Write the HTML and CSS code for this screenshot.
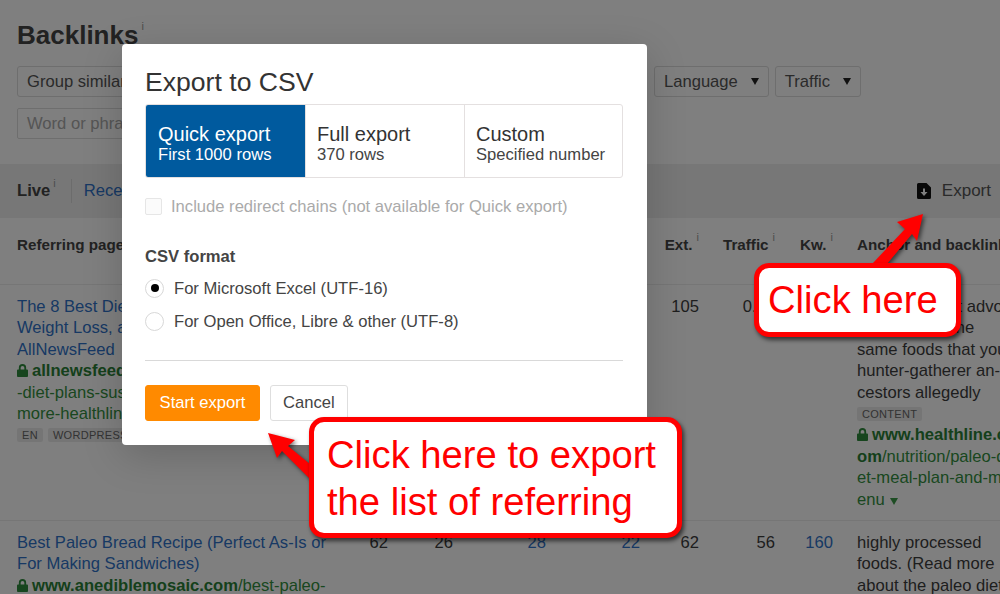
FILE: index.html
```html
<!DOCTYPE html>
<html lang="en">
<head>
<meta charset="utf-8">
<title>Backlinks</title>
<link rel="stylesheet" href="styles.css">
</head>
<body>
<div class="page">
  <header class="head">
    <h1 class="title">Backlinks<sup class="info">i</sup></h1>
    <div class="filters">
      <div class="filter">Group similar</div>
      <div class="filter-group">
        <div class="filter">Language<span class="caret"></span></div>
        <div class="filter">Traffic<span class="caret"></span></div>
      </div>
    </div>
    <div class="search">Word or phrase</div>
  </header>

  <div class="band">
    <div class="band-left">
      <strong class="live">Live<sup class="info">i</sup></strong>
      <span class="sep"></span>
      <a class="link">Recent</a>
    </div>
    <div class="export">
      <svg class="export-icon" viewBox="0 0 14 16" aria-hidden="true"><path d="M1.5 0H9.5L14 4.5V14.5A1.5 1.5 0 0 1 12.5 16H1.5A1.5 1.5 0 0 1 0 14.5V1.5A1.5 1.5 0 0 1 1.5 0Z" fill="#111"/><path d="M6 5.5H8V9H10.5L7 13L3.5 9H6Z" fill="#fff"/></svg>
      <span>Export</span>
    </div>
  </div>

  <div class="row row-head">
    <div>Referring page</div>
    <div></div><div></div><div></div><div></div>
    <div class="num">Ext.<sup class="info">i</sup></div>
    <div class="num">Traffic<sup class="info">i</sup></div>
    <div class="num">Kw.<sup class="info">i</sup></div>
    <div class="anchor">Anchor and backlink</div>
  </div>

  <div class="row row-one">
    <div>
      <a class="link">The 8 Best Diets for<br>Weight Loss, and<br>AllNewsFeed</a>
      <div class="url"><svg class="lock" viewBox="0 0 12 14" aria-hidden="true"><path d="M2 6V4a4 4 0 0 1 8 0v2h1a1 1 0 0 1 1 1v6a1 1 0 0 1-1 1H1a1 1 0 0 1-1-1V7a1 1 0 0 1 1-1ZM4 6h4V4a2 2 0 0 0-4 0Z" fill="#2f8a3c"/></svg><b>allnewsfeed</b><br>-diet-plans-sustain<br>more-healthline</div>
      <div class="tags"><span class="tag">EN</span><span class="tag">WORDPRESS</span></div>
    </div>
    <div></div><div></div><div></div><div></div>
    <div class="num">105</div>
    <div class="num">0.00</div>
    <div class="num"></div>
    <div class="anchor">
      The paleo diet advo<br>cates eating the<br>same foods that your<br>hunter-gatherer an-<br>cestors allegedly
      <div class="tags"><span class="tag">CONTENT</span></div>
      <div class="url"><svg class="lock" viewBox="0 0 12 14" aria-hidden="true"><path d="M2 6V4a4 4 0 0 1 8 0v2h1a1 1 0 0 1 1 1v6a1 1 0 0 1-1 1H1a1 1 0 0 1-1-1V7a1 1 0 0 1 1-1ZM4 6h4V4a2 2 0 0 0-4 0Z" fill="#2f8a3c"/></svg><b>www.healthline.c<br>om</b>/nutrition/paleo-di<br>et-meal-plan-and-me<br>enu<span class="caret caret-green"></span></div>
    </div>
  </div>

  <div class="row">
    <div>
      <a class="link">Best Paleo Bread Recipe (Perfect As-Is or<br>For Making Sandwiches)</a>
      <div class="url"><svg class="lock" viewBox="0 0 12 14" aria-hidden="true"><path d="M2 6V4a4 4 0 0 1 8 0v2h1a1 1 0 0 1 1 1v6a1 1 0 0 1-1 1H1a1 1 0 0 1-1-1V7a1 1 0 0 1 1-1ZM4 6h4V4a2 2 0 0 0-4 0Z" fill="#2f8a3c"/></svg><b>www.anediblemosaic.com</b>/best-paleo-</div>
    </div>
    <div class="num">62</div>
    <div class="num">26</div>
    <div class="num"><a class="link">28</a></div>
    <div class="num"><a class="link">22</a></div>
    <div class="num">62</div>
    <div class="num">56</div>
    <div class="num"><a class="link">160</a></div>
    <div class="anchor">highly processed<br>foods. (Read more<br>about the paleo diet</div>
  </div>
</div>

<div class="overlay"></div>

<section class="modal">
  <h2 class="modal-title">Export to CSV</h2>
  <div class="tabs">
    <div class="tab tab-active"><div class="tab-name">Quick export</div><div>First 1000 rows</div></div>
    <div class="tab"><div class="tab-name">Full export</div><div>370 rows</div></div>
    <div class="tab"><div class="tab-name">Custom</div><div>Specified number</div></div>
  </div>
  <div class="check"><span class="box"></span>Include redirect chains (not available for Quick export)</div>
  <div class="format">CSV format</div>
  <div class="radio"><span class="dot dot-on"></span>For Microsoft Excel (UTF-16)</div>
  <div class="radio"><span class="dot"></span>For Open Office, Libre &amp; other (UTF-8)</div>
  <hr class="rule">
  <div class="actions">
    <button class="btn btn-primary">Start export</button>
    <button class="btn">Cancel</button>
  </div>
</section>

<svg class="arrows" viewBox="0 0 1000 594" aria-hidden="true">
  <path d="M923 214 L897 222 L905 229 L873 263 L882 270 L912 234 L917 241 Z" fill="#ff0000"/>
  <path d="M268 433 L295 440 L288 446 L316 469 L310 479 L282 451 L277 458 Z" fill="#ff0000"/>
</svg>

<div class="callout callout-top">Click here</div>
<div class="callout callout-bottom">Click here to export<br>the list of referring</div>
</body>
</html>
```

FILE: styles.css
```css
* { box-sizing: border-box; }
html, body { margin: 0; height: 594px; overflow: hidden; }
body {
  position: relative;
  width: 1000px;
  background: #fff;
  font: 16.6px/21.4px "Liberation Sans", Arial, sans-serif;
  color: #3c3c3c;
}
.page { width: 1000px; height: 594px; overflow: hidden; }

.head { padding: 20px 0 0 17px; height: 164px; }
.title { margin: 0; font-size: 26px; line-height: 30px; font-weight: 700; color: #444; }
.info { font-size: 11px; font-weight: 400; color: #999; line-height: 0; margin-left: 4px; vertical-align: 9px; }
.title .info { margin-left: 3px; vertical-align: 14px; }
.filters { display: flex; justify-content: space-between; width: 844px; margin-top: 16px; }
.filter-group { display: flex; gap: 6px; }
.filter {
  display: flex; align-items: center; height: 31px; padding: 0 9px;
  border: 1px solid #dcdcdc; border-radius: 3px; color: #555;
}
.caret {
  display: inline-block; width: 0; height: 0; margin-left: 13px;
  border-left: 4.5px solid transparent; border-right: 4.5px solid transparent;
  border-top: 7px solid #222;
}
.caret-green { margin-left: 5px; border-top-color: #3c9a48; }
.search {
  width: 300px; height: 31px; margin-top: 11px; padding: 0 9px;
  border: 1px solid #dcdcdc; border-radius: 2px; color: #aaa; line-height: 29px;
}

.band {
  display: flex; justify-content: space-between; align-items: center;
  height: 54px; padding: 0 9px 0 17px; background: #eeeeee;
}
.band-left { display: flex; align-items: center; }
.live { color: #444; }
.live .info { margin-left: 3px; }
.sep { width: 1px; height: 24px; margin: 0 12px 0 15px; background: #d8d8d8; }
.link { color: #2f72c8; text-decoration: none; }
.export { display: flex; align-items: center; gap: 11px; font-size: 17px; color: #555; }
.export-icon { display: block; width: 14px; height: 16px; }

.row {
  display: grid;
  grid-template-columns: 333px 38px 65px 93px 94px 59px 76px 58px 167px;
  padding: 11px 0 0 17px;
  border-top: 1px solid #ececec;
  white-space: nowrap;
}
.row-head { height: 66px; padding-top: 16px; border-top: 0; font-weight: 700; font-size: 15.2px; color: #444; }
.row-one { height: 236px; }
.num { text-align: right; }
.anchor { padding-left: 24px; }
.url { color: #338f40; }
.url b { color: #2a8036; }
.lock { display: inline-block; width: 11px; height: 13px; margin-right: 4px; vertical-align: -1px; }
.tags { display: flex; align-items: center; gap: 5px; height: 21.4px; }
.tag {
  height: 14px; padding: 0 5px; font-size: 11px; line-height: 14px; letter-spacing: .3px;
  background: #ebebeb; border-radius: 2px; color: #666;
}

.overlay { position: absolute; inset: 0; background: rgba(0, 0, 0, .5); }

.modal {
  position: absolute; left: 122px; top: 44px; width: 525px; height: 401px;
  padding: 23px 24px 0 23px; background: #fff; border-radius: 4px;
  box-shadow: 0 10px 40px rgba(0, 0, 0, .18);
}
.modal-title { margin: 0; font-size: 26.6px; line-height: 30px; font-weight: 400; color: #333; }
.tabs {
  display: grid; grid-template-columns: 159px 159px 158px; height: 74px; margin-top: 7px;
  border: 1px solid #e4e0e0; border-radius: 3px; overflow: hidden;
}
.tab { padding: 18px 0 0 11px; line-height: 20px; color: #444; border-left: 1px solid #e4e0e0; }
.tab-name { font-size: 20px; line-height: 22px; color: #333; }
.tab-active { margin: -1px 0 -1px -1px; padding: 19px 0 0 13px; background: #005a9e; color: #fff; border-left: 0; border-radius: 3px 0 0 3px; }
.tab-active .tab-name { color: #fff; }
.check { display: flex; align-items: center; margin-top: 18px; color: #aaa; }
.box { width: 17px; height: 17px; margin-right: 9px; background: #fbfbfb; border: 1px solid #e6e6e6; border-radius: 2px; }
.format { margin-top: 29px; font-weight: 700; color: #444; }
.radio { display: flex; align-items: center; height: 33px; color: #444; }
.format + .radio { margin-top: 4px; }
.dot {
  display: flex; align-items: center; justify-content: center;
  width: 19px; height: 19px; margin-right: 10px;
  border: 1px solid #d8d8d8; border-radius: 50%; background: #fff;
}
.dot-on::after { content: ""; width: 8px; height: 8px; border-radius: 50%; background: #000; }
.rule { height: 1px; margin: 22px 0 0; border: 0; background: #d9d9d9; }
.actions { display: flex; gap: 10px; margin-top: 24px; }
.btn {
  height: 36px; padding: 0 12px; font: inherit; color: #444; background: #fff;
  border: 1px solid #dedede; border-radius: 3px;
}
.btn-primary { width: 115px; background: #ff8a00; border-color: #ff8a00; color: #fff; }

.arrows { position: absolute; inset: 0; width: 1000px; height: 594px; filter: drop-shadow(2px 2px 2px rgba(0, 0, 0, .55)); }

.callout {
  position: absolute; background: #fff; color: #f00; border: 5px solid #f00; border-radius: 15px;
  box-shadow: 2px 3px 4px rgba(0, 0, 0, .6); font-size: 38.2px; white-space: nowrap;
}
.callout-top { left: 754px; top: 263px; width: 207px; height: 74px; padding-left: 9px; line-height: 64px; }
.callout-bottom { left: 309px; top: 417px; width: 373px; height: 121px; padding: 9px 0 0 13px; line-height: 47px; }
```
